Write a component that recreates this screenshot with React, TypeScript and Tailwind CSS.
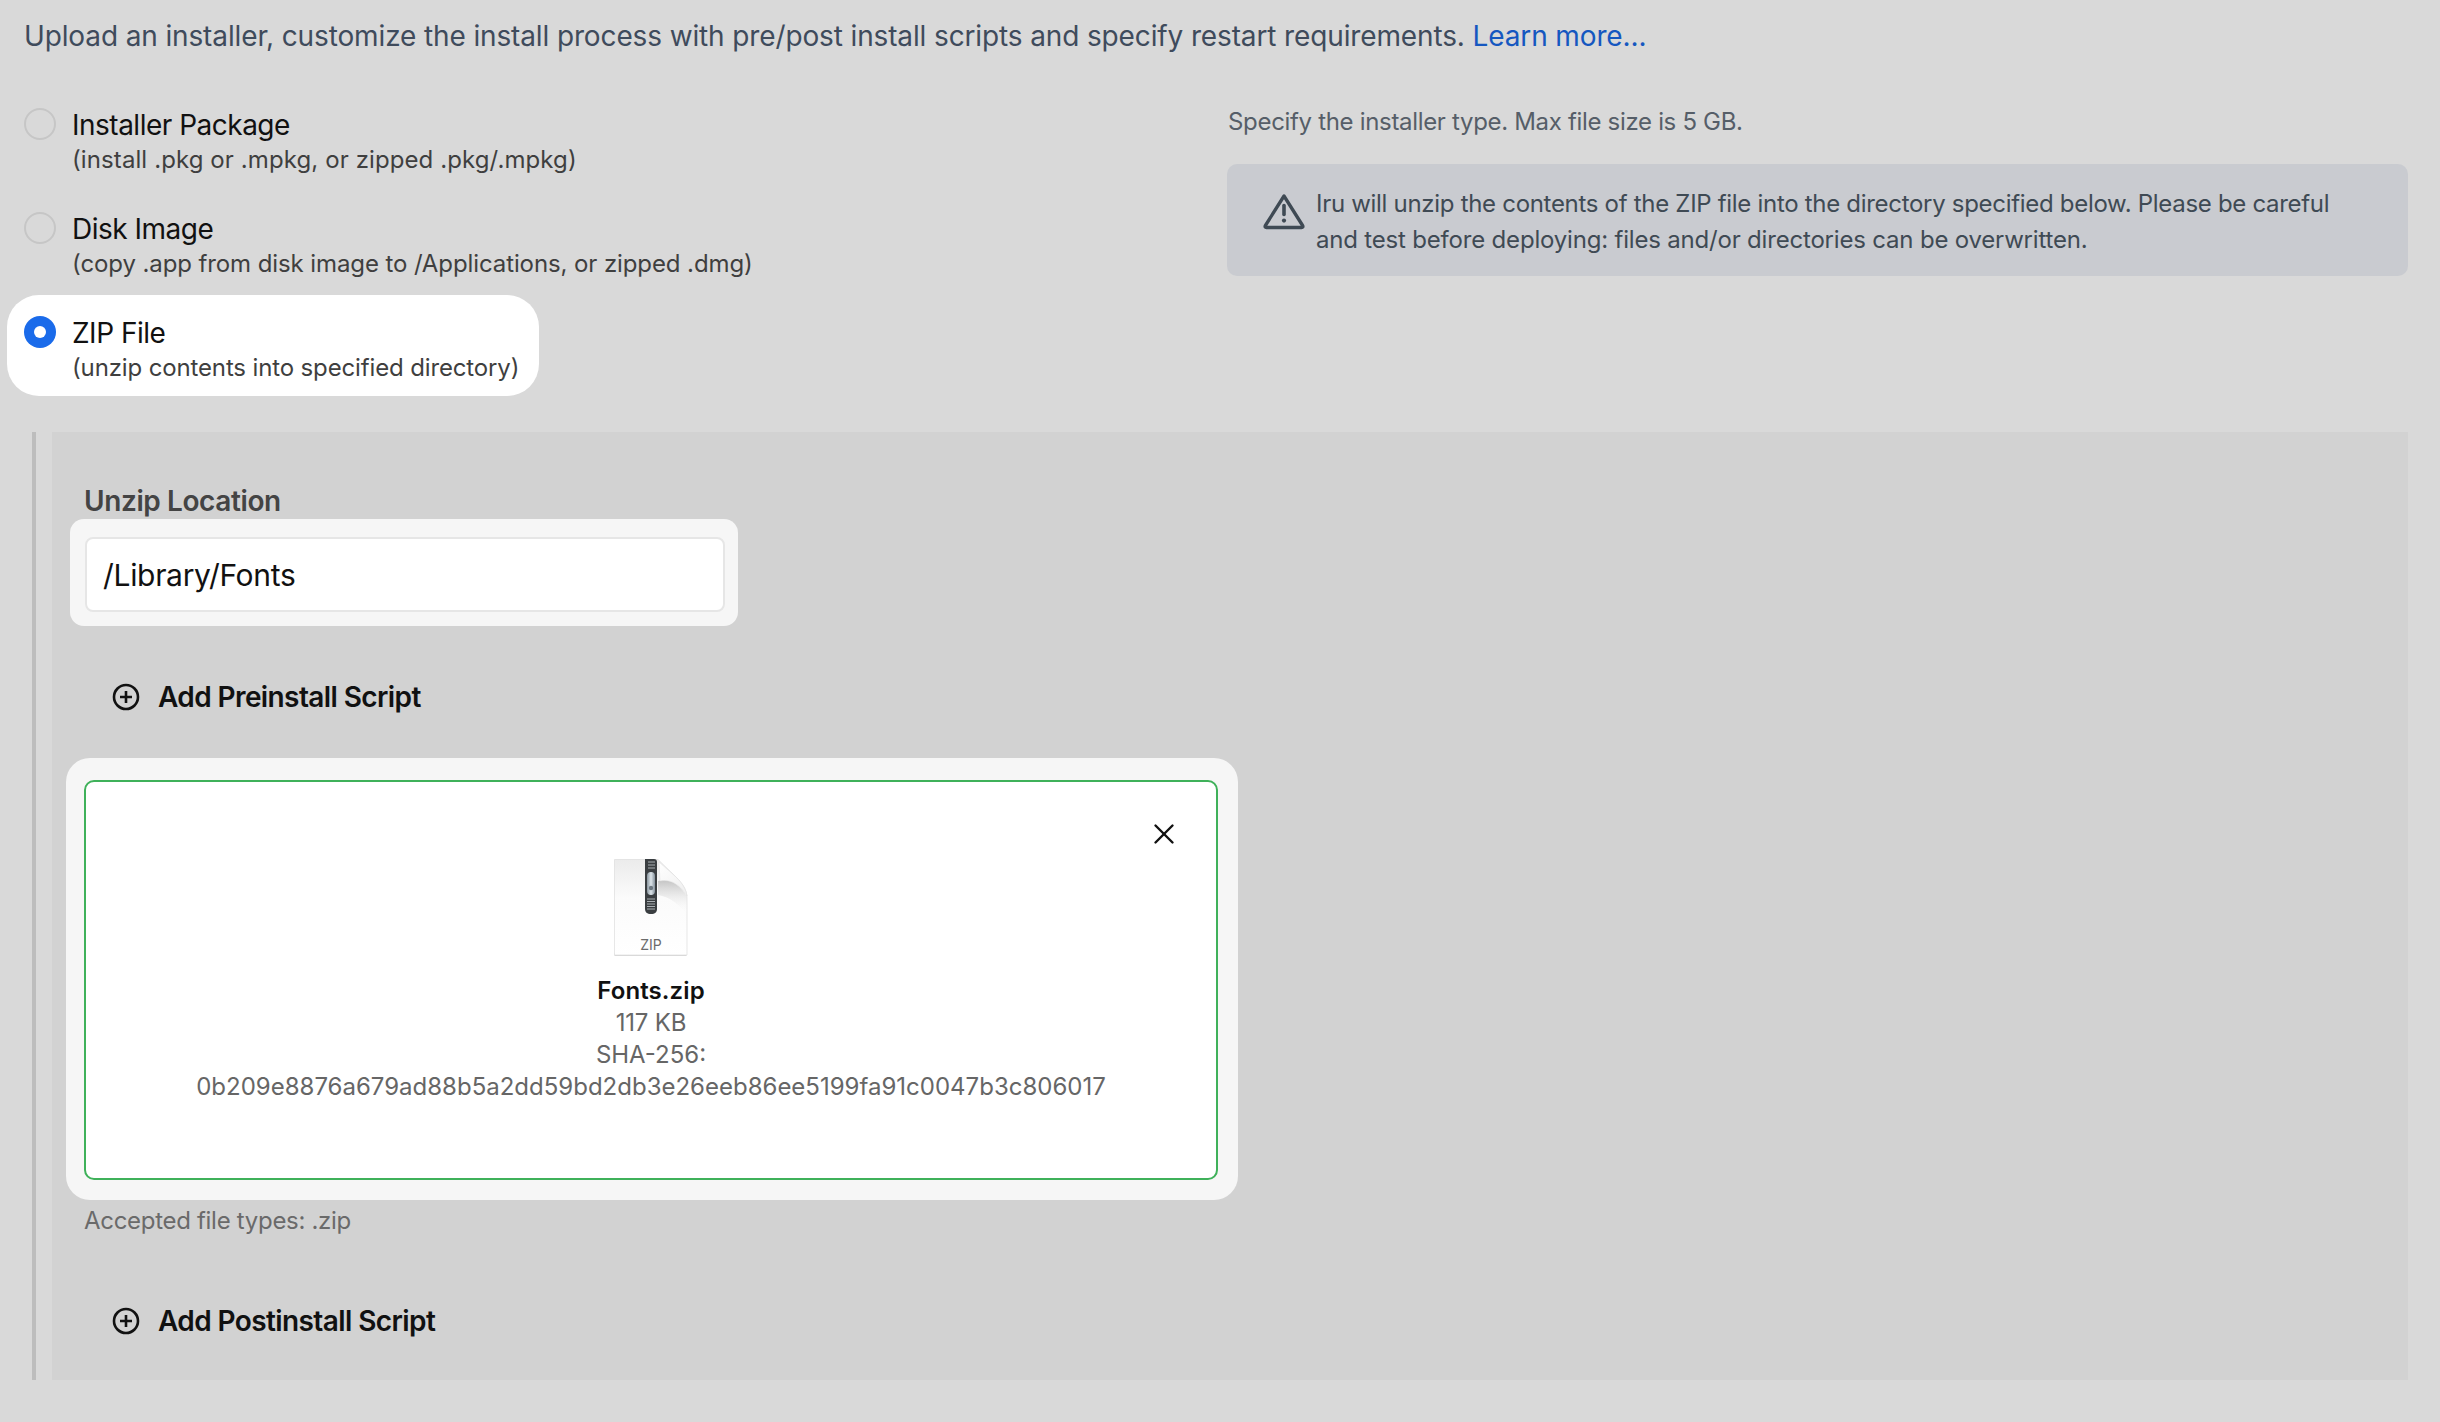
import { X } from 'lucide-react'

const INSTALLER_TYPES = [
  { id: 'package', label: 'Installer Package', hint: '(install .pkg or .mpkg, or zipped .pkg/.mpkg)', hintClass: 'tracking-[0.1px]', selected: false },
  { id: 'dmg', label: 'Disk Image', hint: '(copy .app from disk image to /Applications, or zipped .dmg)', hintClass: 'tracking-[-0.1px]', selected: false },
  { id: 'zip', label: 'ZIP File', hint: '(unzip contents into specified directory)', hintClass: 'tracking-[-0.14px]', selected: true },
]

function ZipIcon() {
  return (
    <svg width="74" height="99" viewBox="0 0 74 99" className="block">
      <defs>
        <linearGradient id="page" x1="0" y1="0" x2="0" y2="1">
          <stop offset="0" stopColor="#ebebeb" />
          <stop offset="0.4" stopColor="#fbfbfb" />
          <stop offset="1" stopColor="#ffffff" />
        </linearGradient>
        <linearGradient id="fold" x1="0" y1="0" x2="0.6" y2="1">
          <stop offset="0" stopColor="#ffffff" />
          <stop offset="1" stopColor="#f1f1f1" />
        </linearGradient>
        <linearGradient id="foldShadow" x1="0" y1="0" x2="0" y2="1">
          <stop offset="0" stopColor="#c4c4c4" />
          <stop offset="1" stopColor="#ffffff" stopOpacity="0" />
        </linearGradient>
        <linearGradient id="pull" x1="0" y1="0" x2="1" y2="0">
          <stop offset="0" stopColor="#8a969f" />
          <stop offset="0.5" stopColor="#dde5ea" />
          <stop offset="1" stopColor="#84909a" />
        </linearGradient>
      </defs>
      <rect x="0.5" y="94" width="72" height="3" fill="#d8d8d8" />
      <path d="M0.5 0.5 H44 L62 18 C69 25 73 31 73 39 V96 H0.5 Z" fill="url(#page)" stroke="#dcdcdc" strokeWidth="0.7" />
      <path d="M44 22 C54 19 66 24 73 38 V56 C66 46 56 38 44 36 Z" fill="url(#foldShadow)" />
      <path d="M45 3 L46 22 C55 20 65 24 73 37 C72 30 68 24 62 18 Z" fill="url(#fold)" stroke="#dedede" strokeWidth="0.5" />
      <path d="M31 0 H40 C42 0 43 1 43 3 V50 C43 53 41 55 37 55 C33 55 31 53 31 50 Z" fill="#3a3e41" />
      <path d="M33 40 H41 M33 42.5 H41 M33 45 H41 M33 47.5 H41 M33 50 H41 M34 3 H41 M34 6 H41 M34 9 H41" stroke="#a9afb3" strokeWidth="1" />
      <rect x="33" y="13" width="8" height="23" rx="4" fill="url(#pull)" />
      <circle cx="37" cy="29" r="2.2" fill="#6c7780" />
      <text x="37" y="91" textAnchor="middle" fontSize="14" fill="#6b6b6b" fontFamily="Inter, sans-serif">ZIP</text>
    </svg>
  )
}

function AlertIcon() {
  return (
    <svg width="42" height="36" viewBox="0 0 42 36" fill="none" stroke="#3f4a54" strokeWidth="3.3" strokeLinecap="round" strokeLinejoin="round" className="shrink-0 mt-[30px]">
      <path d="M21 2 L39.6 31.5 C40.3 32.6 39.8 33.5 38.6 33.5 H3.4 C2.2 33.5 1.7 32.6 2.4 31.5 Z" />
      <path d="M21 11.5 V20.5" strokeWidth="3.6" />
      <path d="M21 26.5 V26.6" strokeWidth="4.2" />
    </svg>
  )
}

function PlusCircle() {
  return (
    <svg width="28" height="28" viewBox="0 0 28 28" fill="none" stroke="#111111" strokeWidth="2.6" className="shrink-0">
      <circle cx="14" cy="14" r="12" />
      <path d="M14 8 V20 M8 14 H20" />
    </svg>
  )
}

function AddScript({ label }: { label: string }) {
  return (
    <div className="flex items-center gap-[18px] h-[40px] text-[28px] font-semibold tracking-[-0.6px] text-[#111111]">
      <PlusCircle />
      <span>{label}</span>
    </div>
  )
}

export default function App() {
  return (
    <main className="min-h-[1422px] bg-[#d9d9d9] pt-[16px] font-['Inter',sans-serif]">
      <p className="pl-[24px] text-[28px] leading-[40px] tracking-[-0.13px] text-[#3f4b5c]">
        Upload an installer, customize the install process with pre/post install scripts and specify restart requirements.{' '}
        <span className="text-[#1557c0]">Learn more...</span>
      </p>

      <div className="flex justify-between mt-[31px] pl-[7px] pr-[32px]">
        {/* Installer type */}
        <div className="flex flex-col gap-[3px]">
          {INSTALLER_TYPES.map((type) => (
            <div
              key={type.id}
              className={`flex gap-[16px] w-fit h-[101px] pl-[17px] pr-[20px] pt-[21px] rounded-[32px] ${type.selected ? 'bg-white' : ''}`}
            >
              {type.selected ? (
                <div className="flex items-center justify-center w-[32px] h-[32px] rounded-full bg-[#1a6bea]">
                  <div className="w-[12px] h-[12px] rounded-full bg-white" />
                </div>
              ) : (
                <div className="w-[32px] h-[32px] rounded-full border-2 border-[#c6c6c6]" />
              )}
              <div>
                <div className="text-[28px] leading-[34px] tracking-[-0.5px] text-[#111111]">{type.label}</div>
                <div className={`text-[24px] leading-[36px] text-[#3f3f3f] ${type.hintClass}`}>{type.hint}</div>
              </div>
            </div>
          ))}
        </div>

        {/* Notes */}
        <div className="w-[1181px] pt-[17px]">
          <p className="pl-px text-[24px] leading-[36px] tracking-[-0.32px] text-[#565e68]">
            Specify the installer type. Max file size is 5 GB.
          </p>
          <div className="flex items-start gap-[11px] h-[112px] mt-[24px] pl-[36px] rounded-[10px] bg-[#c9cbd0]">
            <AlertIcon />
            <p className="pt-[22px] text-[24px] leading-[36px] text-[#3f4a54]">
              <span className="block tracking-[-0.3px]">Iru will unzip the contents of the ZIP file into the directory specified below. Please be careful</span>
              <span className="block tracking-[-0.19px]">and test before deploying: files and/or directories can be overwritten.</span>
            </p>
          </div>
        </div>
      </div>

      <div className="flex gap-[16px] mt-[36px] pl-[32px] pr-[32px]">
        <div className="w-[4px] bg-[#bdbdbd]" />
        <section className="flex-1 h-[948px] pt-[51px] bg-[#d2d2d2]">
          <div className="pl-[32px] text-[28px] leading-[36px] font-semibold tracking-[-0.4px] text-[#444444]">Unzip Location</div>

          <div className="w-[668px] h-[107px] ml-[18px] pl-[15px] pt-[18px] rounded-[14px] bg-[#f6f6f6]">
            <div className="flex items-center w-[640px] h-[75px] pl-[16px] pt-[2px] rounded-[8px] border-2 border-[#e6e6e6] bg-white text-[30px] tracking-[-0.32px] text-[#111111]">
              /Library/Fonts
            </div>
          </div>

          <div className="ml-[60px] mt-[51px]">
            <AddScript label="Add Preinstall Script" />
          </div>

          <div className="w-[1172px] h-[442px] ml-[14px] mt-[41px] pl-[18px] pt-[22px] rounded-[24px] bg-[#f6f6f6]">
            <div className="relative flex flex-col items-center w-[1134px] h-[400px] pt-[77px] rounded-[10px] border-2 border-[#3fb15a] bg-white">
              <X className="absolute top-[35px] right-[35px] w-[34px] h-[34px] text-[#111111]" strokeWidth={1.7} />
              <ZipIcon />
              <div className="mt-[17px] text-center text-[24px] leading-[32px] text-[#666666]">
                <div className="font-semibold tracking-[0.1px] text-[#111111]">Fonts.zip</div>
                <div className="tracking-[-0.2px]">117 KB</div>
                <div>SHA-256:</div>
                <div>0b209e8876a679ad88b5a2dd59bd2db3e26eeb86ee5199fa91c0047b3c806017</div>
              </div>
            </div>
          </div>

          <div className="ml-[32px] mt-[5px] text-[24px] leading-[32px] tracking-[-0.3px] text-[#6a6a6a]">Accepted file types: .zip</div>

          <div className="ml-[60px] mt-[64px]">
            <AddScript label="Add Postinstall Script" />
          </div>
        </section>
      </div>
    </main>
  )
}
